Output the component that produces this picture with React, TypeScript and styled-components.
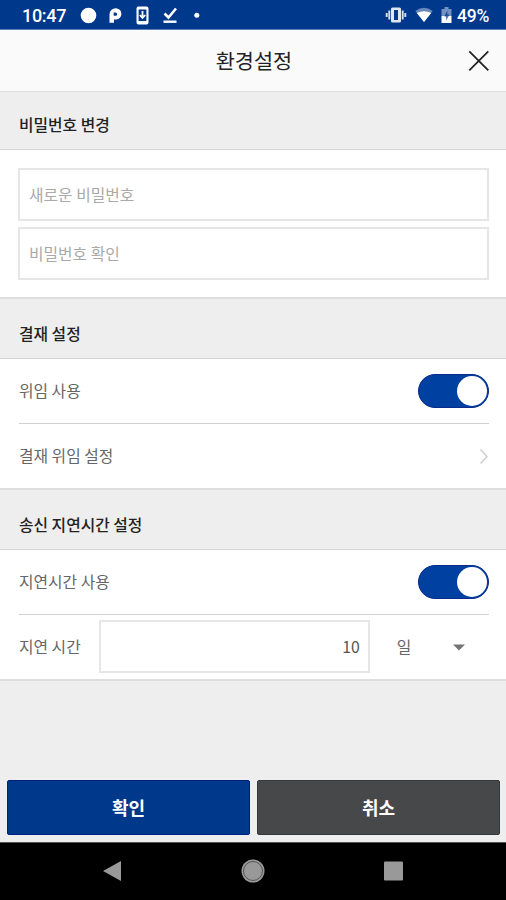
import React, { useState } from "react";
import styled, { createGlobalStyle } from "styled-components";

const GlobalStyle = createGlobalStyle`
  * { box-sizing: border-box; }
  body { margin: 0; background: #eee; }
  button, input { font-family: inherit; }
`;

const Screen = styled.div`
  width: 506px;
  height: 900px;
  display: flex;
  flex-direction: column;
  overflow: hidden;
  background: #eeeeee;
  color: #222;
  font-family: "Noto Sans CJK KR", "Noto Sans", sans-serif;
`;

const StatusBar = styled.div`
  height: 30px;
  flex: none;
  display: flex;
  justify-content: space-between;
  padding: 1px 16px 0 22px;
  background: #00388c;
  border-bottom: 1px solid #5f7fb6;
  color: #fff;
  font: 500 18px/30px Roboto, sans-serif;
`;

const Clock = styled.span`
  width: 57px;
  letter-spacing: -0.3px;
`;

const StatusGroup = styled.div`
  display: flex;
`;

const StatusIcons = styled.svg`
  display: block;
  height: 29px;
  margin-top: -1px;
`;

const Battery = styled.span`
  font-size: 17.5px;
  width: 33px;
  letter-spacing: -0.2px;
`;

const Header = styled.header`
  height: 62px;
  flex: none;
  display: grid;
  grid-template-columns: 56px 1fr 56px;
  align-items: center;
  background: #fafafa;
  border-bottom: 1px solid #dedede;
`;

const Title = styled.h1`
  margin: 0;
  padding: 0 0 1px 2px;
  font-size: 20.8px;
  line-height: 58px;
  font-weight: 400;
  text-align: center;
`;

const CloseButton = styled.button`
  display: flex;
  padding: 0;
  margin-left: 18px;
  border: 0;
  background: none;
`;

const SectionTitle = styled.h2<{ $height: number }>`
  height: ${(p) => p.$height}px;
  flex: none;
  margin: 0;
  padding: ${(p) => p.$height - 37}px 19px 0;
  border-bottom: 1px solid #d4d4d4;
  font-size: 15.8px;
  line-height: 24px;
  font-weight: 500;
`;

const Panel = styled.section<{ $inset?: boolean }>`
  flex: none;
  display: flex;
  flex-direction: column;
  gap: ${(p) => (p.$inset ? 6 : 0)}px;
  padding: ${(p) => (p.$inset ? "18px 17px 17px 18px" : "0 17px 0 19px")};
  background: #fff;
  border-bottom: 2px solid #dedede;
`;

const Field = styled.input`
  height: 53px;
  width: 100%;
  padding: 0 9px 1px;
  border: 2px solid #e6e6e6;
  border-radius: 0;
  background: #fff;
  font-size: 15.8px;
  outline: none;
  &::placeholder { color: #a9a9a9; opacity: 1; }
`;

const Row = styled.div<{ $divided?: boolean }>`
  height: ${(p) => (p.$divided ? 65 : 64)}px;
  display: flex;
  align-items: center;
  justify-content: space-between;
  border-bottom: ${(p) => (p.$divided ? "1px solid #d2d2d2" : "0")};
`;

const Label = styled.span`
  color: #666;
  font-size: 15.8px;
  line-height: 24px;
`;

const Toggle = styled.button<{ $on: boolean }>`
  width: 71px;
  height: 34px;
  display: flex;
  justify-content: ${(p) => (p.$on ? "flex-end" : "flex-start")};
  padding: 1px;
  border: 1px solid ${(p) => (p.$on ? "#0a2a8c" : "#aaa")};
  border-radius: 17px;
  background: ${(p) => (p.$on ? "#0040a0" : "#ccc")};
`;

const Knob = styled.span`
  width: 30px;
  height: 30px;
  border-radius: 50%;
  background: #fff;
`;

const DelayField = styled(Field)`
  width: 271px;
  margin: 0 0 1px 18px;
  padding: 0 8px 0;
  color: #555;
  text-align: right;
`;

const UnitSelect = styled.div`
  flex: 1;
  display: flex;
  align-items: center;
  justify-content: space-between;
  padding: 0 24px 0 27px;
`;

const Actions = styled.div`
  margin-top: auto;
  flex: none;
  display: grid;
  grid-template-columns: 243px 243px;
  gap: 7px;
  padding: 0 6px 7px 7px;
`;

const ActionButton = styled.button<{ $primary?: boolean }>`
  height: 55px;
  padding: 0 0 2px;
  border: 1px solid ${(p) => (p.$primary ? "#00207e" : "#37383a")};
  border-radius: 2px;
  background: ${(p) => (p.$primary ? "#00388c" : "#47484a")};
  color: #fff;
  font-size: 18px;
  font-weight: 700;
`;

const NavBar = styled.nav`
  height: 58px;
  flex: none;
  display: flex;
  justify-content: center;
  background: #000;
  border-top: 1px solid #555;
`;

const Switch = () => {
  const [on, setOn] = useState(true);
  return (
    <Toggle $on={on} onClick={() => setOn(!on)}>
      <Knob />
    </Toggle>
  );
};

export default function App() {
  return (
    <>
      <GlobalStyle />
      <Screen>
        <StatusBar>
          <StatusGroup>
            <Clock>10:47</Clock>
            <StatusIcons width="125" viewBox="79 0 125 29" fill="#fff">
              <circle cx="88.5" cy="15.5" r="7.8" />
              <path fillRule="evenodd" d="M109.500 22.800V14.500a6.200 6.200 0 0 1 6.200-6.300a5.700 5.700 0 0 1 0 11.400h-1.700v3.200zM113.700 12.500v3.300h1.800a1.650 1.650 0 0 0 0-3.300z" />
              <path fillRule="evenodd" d="M138.500 6.500h8a2 2 0 0 1 2 2v14a2 2 0 0 1-2 2h-8a2 2 0 0 1-2-2v-14a2 2 0 0 1 2-2zM138.600 9.500v11.500h7.800V9.500z" />
              <path d="M142.500 11v7M139.800 15l2.700 3 2.700-3" fill="none" stroke="#fff" strokeWidth="1.8" />
              <path d="M164.500 13.500l4 4 7.500-9" fill="none" stroke="#fff" strokeWidth="2.6" />
              <path d="M163.500 20.500h13v2.400h-13z" />
              <circle cx="196.800" cy="15.300" r="2.500" />
            </StatusIcons>
          </StatusGroup>
          <StatusGroup>
            <StatusIcons width="72" viewBox="385 0 72 29" fill="#fff">
              <path fillRule="evenodd" d="M391 9a1.500 1.500 0 0 1 1.500-1.500h7a1.500 1.500 0 0 1 1.500 1.500v12a1.500 1.500 0 0 1-1.500 1.500h-7a1.500 1.500 0 0 1-1.500-1.500zM394 10v10h4V10z" fillOpacity=".88" />
              <path d="M389.300 10.500v9M386.700 13v4M402.700 10.500v9M405.300 13v4" stroke="#fff" strokeOpacity=".85" strokeWidth="1.9" />
              <path d="M415.300 11Q424 4.500 432.700 11L424 22z" fillOpacity=".4" />
              <path d="M416.800 13Q424 9.500 431.200 13L424 22z" />
              <path d="M444.500 7h4v2h3v7h-10V9h3z" fillOpacity=".45" />
              <path d="M441.500 16h10v7h-10z" />
              <path d="M447.400 10.500l-3.200 6h2v4l3.200-6h-2z" fill="#00388c" fillOpacity=".75" />
            </StatusIcons>
            <Battery>49%</Battery>
          </StatusGroup>
        </StatusBar>
        <Header>
          <span />
          <Title>환경설정</Title>
          <CloseButton aria-label="닫기">
            <svg width="22" height="22" viewBox="0 0 22 22" fill="none" stroke="#222" strokeWidth="1.8">
              <path d="M1.300 1.300l19 19M20.300 1.300l-19 19" />
            </svg>
          </CloseButton>
        </Header>
        <SectionTitle $height={58}>비밀번호 변경</SectionTitle>
        <Panel $inset>
          <Field placeholder="새로운 비밀번호" />
          <Field placeholder="비밀번호 확인" />
        </Panel>
        <SectionTitle $height={60}>결재 설정</SectionTitle>
        <Panel>
          <Row $divided>
            <Label>위임 사용</Label>
            <Switch />
          </Row>
          <Row>
            <Label>결재 위임 설정</Label>
            <svg width="10" height="17" viewBox="0 0 10 17" fill="none" stroke="#d0d0d0" strokeWidth="1.6">
              <path d="M1.500 1.500l6.500 7-6.500 7" />
            </svg>
          </Row>
        </Panel>
        <SectionTitle $height={60}>송신 지연시간 설정</SectionTitle>
        <Panel>
          <Row $divided>
            <Label>지연시간 사용</Label>
            <Switch />
          </Row>
          <Row>
            <Label>지연 시간</Label>
            <DelayField defaultValue="10" />
            <UnitSelect>
              <Label>일</Label>
              <svg width="12" height="7" viewBox="0 0 12 7" fill="#757575">
                <path d="M0 .5h12L6 6.500z" />
              </svg>
            </UnitSelect>
          </Row>
        </Panel>
        <Actions>
          <ActionButton $primary>확인</ActionButton>
          <ActionButton>취소</ActionButton>
        </Actions>
        <NavBar>
          <svg width="310" height="57" viewBox="98 843 310 57" fill="#999">
            <path d="M121 861v20l-18-10z" />
            <circle cx="253" cy="871" r="11.500" />
            <circle cx="253" cy="871" r="9.500" fill="none" stroke="#555" strokeWidth="1" />
            <rect x="384" y="861.500" width="19" height="19" rx="1" />
          </svg>
        </NavBar>
      </Screen>
    </>
  );
}
